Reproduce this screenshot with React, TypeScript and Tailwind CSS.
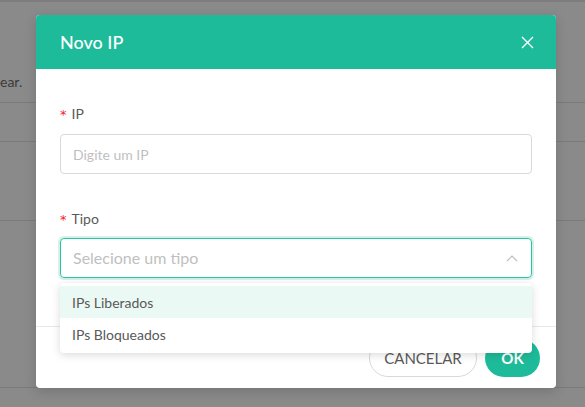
import React from "react";

function Star() {
  return (
    <span
      className="text-[#f5222d] text-[13px] leading-none mr-[5px] translate-y-[1px]"
      style={{ fontFamily: "'DejaVu Sans', sans-serif" }}
    >
      *
    </span>
  );
}

export default function App() {
  const font = { fontFamily: "Lato, 'Noto Sans', sans-serif" };
  return (
    <div className="relative w-[585px] h-[407px] overflow-hidden bg-[#8a8a8a]" style={font}>
      {/* background page (dimmed) */}
      <div className="flex flex-col">
        <div className="h-[2px] bg-[#7d7d7d]" />
        <div className="h-[101px] border-b border-[#7a7a7a] flex items-start pt-[70px]">
          <span className="text-[14px] leading-[20px] text-[#3a3a3a]">ear.</span>
        </div>
        <div className="h-[39px] border-b border-[#7a7a7a]" />
        <div className="h-[79px] border-b border-[#7a7a7a]" />
        <div className="h-[167px] border-b border-[#7a7a7a]" />
      </div>

      {/* modal */}
      <div className="absolute left-[36px] top-[15px] w-[520px] h-[373px] bg-white rounded-[4px] shadow-[0_4px_12px_rgba(0,0,0,0.15)] flex flex-col overflow-visible">
        <div className="h-[54px] bg-[#1dbb9a] rounded-t-[4px] flex items-center justify-between pl-[24px] pr-[22px]">
          <span className="text-white text-[18px] font-medium">Novo IP</span>
          <svg width="13" height="13" viewBox="0 0 13 13" className="text-white">
            <path d="M1 1 L12 12 M12 1 L1 12" stroke="currentColor" strokeWidth="1.4" fill="none" />
          </svg>
        </div>
        <div className="flex flex-col px-[24px] pt-[33px]">
          <label className="h-[22px] flex items-center text-[14px] text-[#595959]">
            <Star />IP
          </label>
          <div className="mt-[10px] h-[40px] border border-[#d9d9d9] rounded-[4px] flex items-center px-[12px] text-[14px] text-[#bfbfbf]">
            Digite um IP
          </div>
          <label className="mt-[33px] h-[22px] flex items-center text-[14px] text-[#595959]">
            <Star />Tipo
          </label>
          <div className="relative mt-[9px]">
            <div className="h-[40px] border border-[#2ec39f] rounded-[4px] shadow-[0_0_0_2px_rgba(29,187,154,0.2)] flex items-center justify-between px-[12px] text-[16px] text-[#bfbfbf]">
              <span>Selecione um tipo</span>
              <svg width="12" height="8" viewBox="0 0 12 8" className="mr-[1px]">
                <path d="M1 7 L6 2 L11 7" stroke="#bfbfbf" strokeWidth="1.2" fill="none" />
              </svg>
            </div>
            <div className="absolute left-0 right-0 top-[45px] z-10 bg-white rounded-[4px] shadow-[0_2px_8px_rgba(0,0,0,0.15)] py-[3px]">
              <div className="h-[32px] flex items-center px-[12px] text-[14px] text-[#595959] bg-[#ebf9f4]">IPs Liberados</div>
              <div className="h-[32px] flex items-center px-[12px] text-[14px] text-[#595959]">IPs Bloqueados</div>
            </div>
          </div>
        </div>
        <div className="mt-auto border-t border-[#e8e8e8] h-[62px] flex items-start justify-end gap-[8px] pt-[12px] pr-[16px]">
          <button className="h-[38px] w-[108px] rounded-full border border-[#d9d9d9] bg-white text-[15px] text-[#595959]">CANCELAR</button>
          <button className="h-[38px] w-[55px] rounded-full bg-[#1dbb9a] text-white text-[15px] font-bold">OK</button>
        </div>
      </div>
    </div>
  );
}
